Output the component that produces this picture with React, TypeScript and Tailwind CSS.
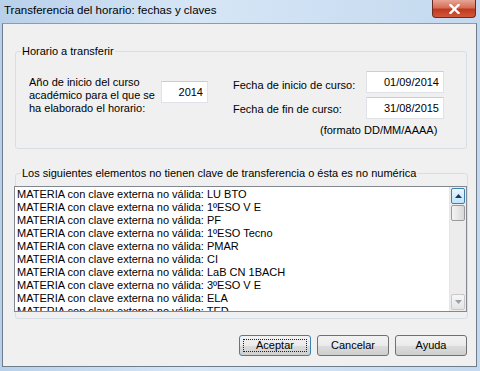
const items = [
  'LU BTO',
  '1ºESO V E',
  'PF',
  '1ºESO Tecno',
  'PMAR',
  'CI',
  'LaB CN 1BACH',
  '3ºESO V E',
  'ELA',
  'TED',
];

const font = { fontFamily: '"Liberation Sans", Arial, sans-serif' };

function TextBox({ value, className }: { value: string; className: string }) {
  return (
    <div
      className={`flex items-center justify-end border border-[#dfe3e8] border-t-[#c9ced4] bg-white pr-[4px] text-[11px] leading-[13px] text-black ${className}`}
    >
      {value}
    </div>
  );
}

function WinButton({ label, primary }: { label: string; primary?: boolean }) {
  return (
    <button
      className={`relative flex h-[21px] w-[72px] items-center justify-center rounded-[3px] border text-[11px] leading-[13px] text-black ${
        primary ? 'border-[#3c7fb1]' : 'border-[#707070]'
      } bg-[linear-gradient(#f2f2f2_0%,#ebebeb_50%,#dddddd_51%,#cfcfcf_100%)]`}
    >
      {primary && <span className="absolute inset-[3px] border border-dotted border-[#222]" />}
      <span className="relative">{label}</span>
    </button>
  );
}

function ScrollBar() {
  return (
    <div className="flex h-full w-[17px] shrink-0 flex-col border-l border-[#e6e6e6] bg-[#ececec] px-[1px] py-[1px]">
      <div className="flex h-[16px] items-center justify-center rounded-[2px] border border-[#3c7fb1] bg-[linear-gradient(#eaf6fd,#bee6fd)]">
        <svg width="7" height="4" viewBox="0 0 7 4">
          <path d="M0 4 L3.5 0 L7 4 Z" fill="#1e395b" />
        </svg>
      </div>
      <div className="mt-[1px] h-[16px] rounded-[2px] border border-[#9a9a9a] bg-[linear-gradient(90deg,#f3f3f3,#e6e6e6_50%,#d8d8d8)]" />
      <div className="flex-1" />
      <div className="flex h-[16px] items-center justify-center rounded-[2px] border border-[#c8c8c8] bg-[linear-gradient(#f7f7f7,#e4e4e4)]">
        <svg width="7" height="4" viewBox="0 0 7 4">
          <path d="M0 0 L3.5 4 L7 0 Z" fill="#9aa1a8" />
        </svg>
      </div>
    </div>
  );
}

export default function App() {
  return (
    <div
      className="flex h-[371px] w-[480px] flex-col overflow-hidden bg-[linear-gradient(90deg,#b8d0ea,#d6e6f6_40%,#c4d9ef)]"
      style={font}
    >
      {/* title bar */}
      <div className="flex h-[23px] shrink-0 items-start">
        <div className="pl-[4px] pt-[3px] text-[11.5px] leading-[15px] text-black">
          Transferencia del horario: fechas y claves
        </div>
        <div className="ml-auto mr-[4px] flex h-[18px] w-[44px] items-center justify-center rounded-b-[4px] border border-t-0 border-[#6d2a22] bg-[linear-gradient(#e8a493,#d4705a_45%,#c0391e_55%,#d0583a)]">
          <svg width="11" height="10" viewBox="0 0 11 10">
            <path d="M1.5 1 L9.5 9 M9.5 1 L1.5 9" stroke="#fff" strokeWidth="2.4" strokeLinecap="square" />
          </svg>
        </div>
      </div>

      {/* client area */}
      <div className="ml-[2px] h-[344px] w-[475px] border border-[#6f7c8a] border-t-[#8d9bab] bg-[#f0f0f0] text-[11px] leading-[13px] text-black">
        <fieldset className="ml-[12px] mt-[21px] h-[104px] w-[452px] rounded-[3px] border border-[#d5dfe5]">
          <legend className="ml-[5px] px-[1px]">Horario a transferir</legend>
          <div className="flex pl-[13px] pt-[13px]">
            <div className="mt-[5px] w-[132px]">
              Año de inicio del curso
              <br />
              académico para el que se
              <br />
              ha elaborado el horario:
            </div>
            <TextBox value="2014" className="mt-[10px] h-[22px] w-[47px]" />
            <div className="ml-[25px] flex flex-col">
              <div className="flex items-end">
                <div className="mb-[1px] w-[133px]">Fecha de inicio de curso:</div>
                <TextBox value="01/09/2014" className="h-[22px] w-[78px]" />
              </div>
              <div className="mt-[4px] flex items-end">
                <div className="mb-[3px] w-[133px]">Fecha de fin de curso:</div>
                <TextBox value="31/08/2015" className="h-[22px] w-[78px]" />
              </div>
              <div className="ml-[87px] mt-[5px]">(formato DD/MM/AAAA)</div>
            </div>
          </div>
        </fieldset>

        <fieldset className="ml-[12px] mt-[18px] h-[152px] w-[452px] rounded-[3px] border border-[#d5dfe5]">
          <legend className="ml-[5px] px-[1px]">
            Los siguientes elementos no tienen clave de transferencia o ésta es no numérica
          </legend>
          <div className="-ml-[2px] mt-[6px] flex h-[126px] w-[453px] overflow-hidden border border-[#828790] bg-white">
            <div className="flex-1 overflow-hidden pl-[2px] pt-[1px]">
              {items.map((it) => (
                <div key={it} className="h-[13px] whitespace-nowrap">
                  MATERIA con clave externa no válida: {it}
                </div>
              ))}
            </div>
            <ScrollBar />
          </div>
        </fieldset>

        <div className="mr-[9px] mt-[16px] flex justify-end gap-[6px]">
          <WinButton label="Aceptar" primary />
          <WinButton label="Cancelar" />
          <WinButton label="Ayuda" />
        </div>
      </div>
    </div>
  );
}
